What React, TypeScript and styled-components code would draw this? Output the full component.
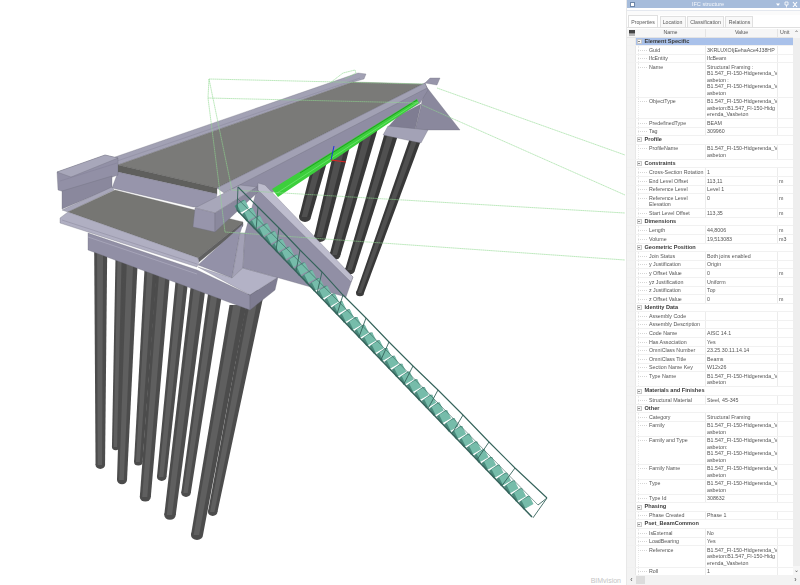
import React from 'react';
import styled, { createGlobalStyle } from 'styled-components';

type Prop = { name: string[]; value?: string[]; unit?: string };
type Section = { title: string; selected?: boolean; rows: Prop[] };

const LONG = 'B1.547_FI-150-Hidgerenda_V';

const sections: Section[] = [
  {
    title: 'Element Specific',
    selected: true,
    rows: [
      { name: ['Guid'], value: ['3KRLUXOIjEehaAce4J38HP'] },
      { name: ['IfcEntity'], value: ['IfcBeam'] },
      { name: ['Name'], value: ['Structural Framing :', LONG, 'asbeton :', LONG, 'asbeton'] },
      { name: ['ObjectType'], value: [LONG, 'asbeton:B1.547_FI-150-Hidg', 'erenda_Vasbeton'] },
      { name: ['PredefinedType'], value: ['BEAM'] },
      { name: ['Tag'], value: ['309960'] },
    ],
  },
  { title: 'Profile', rows: [{ name: ['ProfileName'], value: [LONG, 'asbeton'] }] },
  {
    title: 'Constraints',
    rows: [
      { name: ['Cross-Section Rotation'], value: ['1'] },
      { name: ['End Level Offset'], value: ['113,11'], unit: 'm' },
      { name: ['Reference Level'], value: ['Level 1'] },
      { name: ['Reference Level', 'Elevation'], value: ['0'], unit: 'm' },
      { name: ['Start Level Offset'], value: ['113,35'], unit: 'm' },
    ],
  },
  {
    title: 'Dimensions',
    rows: [
      { name: ['Length'], value: ['44,8006'], unit: 'm' },
      { name: ['Volume'], value: ['19,513083'], unit: 'm3' },
    ],
  },
  {
    title: 'Geometric Position',
    rows: [
      { name: ['Join Status'], value: ['Both joins enabled'] },
      { name: ['y Justification'], value: ['Origin'] },
      { name: ['y Offset Value'], value: ['0'], unit: 'm' },
      { name: ['yz Justification'], value: ['Uniform'] },
      { name: ['z Justification'], value: ['Top'] },
      { name: ['z Offset Value'], value: ['0'], unit: 'm' },
    ],
  },
  {
    title: 'Identity Data',
    rows: [
      { name: ['Assembly Code'] },
      { name: ['Assembly Description'] },
      { name: ['Code Name'], value: ['AISC 14.1'] },
      { name: ['Has Association'], value: ['Yes'] },
      { name: ['OmniClass Number'], value: ['23.25.30.11.14.14'] },
      { name: ['OmniClass Title'], value: ['Beams'] },
      { name: ['Section Name Key'], value: ['W12x26'] },
      { name: ['Type Name'], value: [LONG, 'asbeton'] },
    ],
  },
  { title: 'Materials and Finishes', rows: [{ name: ['Structural Material'], value: ['Steel, 45-345'] }] },
  {
    title: 'Other',
    rows: [
      { name: ['Category'], value: ['Structural Framing'] },
      { name: ['Family'], value: [LONG, 'asbeton'] },
      { name: ['Family and Type'], value: [LONG, 'asbeton:', LONG, 'asbeton'] },
      { name: ['Family Name'], value: [LONG, 'asbeton'] },
      { name: ['Type'], value: [LONG, 'asbeton'] },
      { name: ['Type Id'], value: ['308632'] },
    ],
  },
  { title: 'Phasing', rows: [{ name: ['Phase Created'], value: ['Phase 1'] }] },
  {
    title: 'Pset_BeamCommon',
    rows: [
      { name: ['IsExternal'], value: ['No'] },
      { name: ['LoadBearing'], value: ['Yes'] },
      { name: ['Reference'], value: [LONG, 'asbeton:B1.547_FI-150-Hidg', 'erenda_Vasbeton'] },
      { name: ['Roll'], value: ['1'] },
    ],
  },
];

const tabs = ['Properties', 'Location', 'Classification', 'Relations'];

// [top x, top y, bottom x, bottom y, top width, bottom width]
const frontPiles = [
  [120, 258, 115.7, 447, 9, 7.5],
  [100.7, 252, 100.3, 465, 13, 9.5],
  [150.7, 270, 138.3, 462, 12.5, 8.5],
  [130.7, 262, 122, 480, 14, 10],
  [181.7, 282, 161.7, 477, 12.5, 9.5],
  [163, 274, 145.3, 497, 14, 11],
  [215, 294, 186, 493, 14, 9.5],
  [198, 288, 170, 515, 15, 11.5],
  [256.7, 290, 212.7, 512, 16, 9.5],
  [238, 305, 197, 535, 17, 12],
];

const backPiles = [
  [320, 162, 305, 217, 14, 12],
  [342, 148, 320, 237, 15, 12],
  [370, 130, 335, 255, 15, 11],
  [392, 132, 350, 270, 14, 10],
  [417, 135, 360, 293, 12, 8],
];

const railPosts = [
  [238, 187], [258, 207], [279, 228], [300, 250], [322, 272], [343, 295], [366, 318],
  [389, 342], [413, 366], [438, 390], [463, 415], [489, 442], [515, 468], [547, 498],
];

const wires = [
  '209,79 423,84',
  '208,98 420,103',
  '209,79 208,98 225,232',
  '209,79 232,190',
  '232,190 625,213',
  '225,232 625,260',
  '437,88 625,155',
  '422,105 625,195',
  '330,83 343,73 355,70 356,73 345,79',
];

function Pile({ p, dark }: { p: number[]; dark?: boolean }) {
  const [x1, y1, x2, y2, w1, w2] = p;
  const shape = `${x1 - w1 / 2},${y1} ${x1 + w1 / 2},${y1} ${x2 + w2 / 2},${y2} ${x2 - w2 / 2},${y2}`;
  // lit stripe left of centre
  const lit = `${x1 - w1 * 0.28},${y1} ${x1 + w1 * 0.18},${y1} ${x2 + w2 * 0.18},${y2} ${x2 - w2 * 0.28},${y2}`;
  return (
    <g>
      <ellipse cx={x2} cy={y2} rx={w2 / 2} ry={w2 / 2.4} fill={dark ? '#3c3c3c' : '#4c4c4c'} />
      <polygon points={shape} fill={dark ? '#383838' : '#4c4c4c'} />
      <polygon points={lit} fill={dark ? '#505050' : '#5f5f5f'} />
    </g>
  );
}

function Face({ d, c, edge }: { d: string; c: string; edge?: string }) {
  return <polygon points={d} fill={c} stroke={edge || '#6a6878'} strokeWidth={0.3} strokeLinejoin="round" />;
}

const stringerY = (x: number) => 210 + (x - 237) * 1.04;

function Stair() {
  const count = 39;
  const treads = new Array(count).fill(0).map((_, i) => {
    const x = 240 + (i / count) * 292;
    const y = stringerY(x);
    const px = x - 4;
    const py = y - 8;
    return (
      <g key={i}>
        <polygon
          points={`${px - 1.5},${py + 1} ${px + 7},${py - 5} ${px + 9},${py - 5} ${px + 11},${py + 3} ${px + 3},${py + 8.5}`}
          fill="#4a8a7c"
        />
        <polygon
          points={`${px + 1},${py - 0.5} ${px + 9},${py - 5} ${px + 13},${py + 3} ${px + 5},${py + 7.5}`}
          fill="#76bcaa"
        />
      </g>
    );
  });
  return (
    <g>
      {treads}
      <g stroke="#35635b" fill="none">
        <polyline points={railPosts.map((p) => p.join(',')).join(' ')} strokeWidth={1.1} />
        <line x1={237} y1={198} x2={538} y2={505} strokeWidth={0.6} />
        <line x1={237} y1={210} x2={532} y2={517} strokeWidth={1.5} />
        {railPosts.map(([x, y], i) => {
          const bx = x - 1 - (i / 13) * 13;
          return <line key={i} x1={x} y1={y} x2={bx} y2={stringerY(bx)} strokeWidth={0.9} />;
        })}
        <line x1={547} y1={498} x2={538} y2={505} strokeWidth={0.9} />
      </g>
    </g>
  );
}

function BridgeModel() {
  return (
    <Model viewBox="0 0 626 585">
      {backPiles.map((p, i) => (
        <Pile key={i} p={p} dark />
      ))}

      {/* far abutment */}
      <Face d="425,85 460,130 415,130 421,106" c="#8a889d" />
      <Face d="421,104 415,130 388,127 398,116" c="#7f7d92" />
      <Face d="388,126 428,130 421,143 383,135" c="#a3a2b6" />
      <Face d="425,83 430,78 440,78 437,85" c="#9795aa" />

      {/* back kerb and deck */}
      <Face d="115,157 358,73 366,74 364,79 353,82 118,165" c="#a2a1b4" />
      <polyline points="117,161 360,78" stroke="#8b899c" strokeWidth={0.5} fill="none" />
      <Face d="118,165 353,82 423,84 217,188" c="#7a7a78" edge="#6a6a68" />
      <Face d="118,165 217,188 217,194 118,172" c="#5f5f5d" edge="#595959" />
      <Face d="118,172 217,194 215,208 193,207 112,188" c="#9795ab" />

      {/* side beam */}
      <Face d="217,188 425,83 428,90 420,103 273,192 258,190" c="#8f8da3" />
      <Face d="217,188 425,83 427,88 224,193" c="#a2a1b4" />

      {/* green element */}
      <polygon points="272,189 417,99 419,103 278,197" fill="#3ccf3c" />
      <polyline points="300,173 417,100" stroke="#128a12" strokeWidth={0.7} fill="none" />
      <polyline points="277,193 418,102" stroke="#8af58a" strokeWidth={0.5} fill="none" />

      {/* near end block and wall */}
      <Face d="57,172 105,155 118,158 118,175 68,193 58,190" c="#9290a6" />
      <Face d="57,172 105,155 118,158 71,177" c="#a8a7ba" />
      <polyline points="60,181 117,163" stroke="#77758a" strokeWidth={0.3} fill="none" />
      <Face d="62,191 112,176 112,188 62,209" c="#8a889d" />

      {frontPiles.map((p, i) => (
        <Pile key={i} p={p} />
      ))}

      {/* pile cap */}
      <Face d="88,233 197,270 250,295 250,310 88,250" c="#918fa5" />
      <polyline points="88,237 197,274" stroke="#b3b2c5" strokeWidth={0.6} fill="none" />
      <Face d="250,295 278,277 275,290 250,310" c="#7f7d92" />

      {/* lower deck */}
      <Face d="62,210 112,187 114,190 68,212" c="#a8a7ba" />
      <Face d="68,212 115,190 243,222 198,258" c="#767673" edge="#6a6a68" />
      <Face d="198,258 243,222 243,226 199,262" c="#606060" edge="#595959" />
      <Face d="60,218 68,212 198,258 199,262 197,267 60,223" c="#b0afc2" />
      <polyline points="62,220 197,264" stroke="#8b899c" strokeWidth={0.5} fill="none" />

      {/* abutment walls */}
      <Face d="198,265 243,224 240,233 232,278" c="#9391a8" />
      <Face d="232,278 240,233 245,233 243,268" c="#a3a1b6" />
      <Face d="198,267 232,278 243,268 272,276 278,277 250,295" c="#b3b2c6" />
      <Face d="258,185 353,277 346,297 272,276 243,268 245,233" c="#918fa5" />
      <Face d="258,183 265,185 353,277 351,282 258,190" c="#bdbccd" />

      {/* near block */}
      <Face d="195,208 240,185 257,187 215,213" c="#a8a7ba" />
      <Face d="195,208 215,213 215,232 193,227" c="#9795ab" />
      <Face d="215,213 257,187 258,192 215,232" c="#8a889d" />

      <g stroke="#8ed88e" strokeWidth={0.6} fill="none" strokeDasharray="1.6 0.3">
        {wires.map((d) => (
          <polyline key={d} points={d} />
        ))}
      </g>

      <line x1={331} y1={160} x2={334} y2={146} stroke="#2030e0" strokeWidth={1} />
      <line x1={331} y1={160} x2={346} y2={162} stroke="#e02020" strokeWidth={1} />

      <Stair />
    </Model>
  );
}

function PropRow({ row }: { row: Prop }) {
  return (
    <Row>
      <Gutter />
      <Tree />
      <NameCell>
        {row.name.map((l) => (
          <Line key={l}>{l}</Line>
        ))}
      </NameCell>
      <ValueCell>
        {row.value?.map((l, i) => (
          <Line key={i}>{l}</Line>
        ))}
      </ValueCell>
      <UnitCell>{row.unit}</UnitCell>
    </Row>
  );
}

export default function App() {
  return (
    <Page>
      <GlobalStyle />
      <Viewport>
        <BridgeModel />
        <Watermark>BIMvision</Watermark>
      </Viewport>
      <Panel>
        <TitleBar>
          <TitleIcon />
          <Title>IFC structure</Title>
          <svg width="22" height="7" viewBox="0 0 22 7">
            <path d="M0 2.5h4L2 5z" fill="#fff" />
            <path d="M9 1h3v3h-3zM10.5 4v2.5" stroke="#fff" strokeWidth={0.8} fill="none" />
            <path d="M17 1l4 5M21 1l-4 5" stroke="#fff" strokeWidth={1.1} />
          </svg>
        </TitleBar>
        <Toolbar />
        <TabStrip>
          {tabs.map((t, i) => (
            <Tab key={t} active={i === 0}>
              {t}
            </Tab>
          ))}
        </TabStrip>
        <TableArea>
          <Table>
            <HeadRow>
              <HeadIcon>
                <svg width="6" height="6" viewBox="0 0 6 6">
                  <path d="M0 0h6v3H0zM1 3v3M3 3v3M5 3v3" fill="#444" stroke="#444" strokeWidth={0.7} />
                </svg>
              </HeadIcon>
              <HeadCell>Name</HeadCell>
              <HeadCell>Value</HeadCell>
              <UnitHead>Unit</UnitHead>
            </HeadRow>
            {sections.map((s) => (
              <React.Fragment key={s.title}>
                <GroupRow selected={s.selected}>
                  <Gutter />
                  <FoldBox />
                  <GroupTitle>{s.title}</GroupTitle>
                </GroupRow>
                {s.rows.map((r) => (
                  <PropRow key={r.name[0]} row={r} />
                ))}
              </React.Fragment>
            ))}
          </Table>
          <VScroll>
            <Arrow>⌃</Arrow>
            <Track />
            <Arrow>⌄</Arrow>
          </VScroll>
        </TableArea>
        <HScroll>
          <ScrollEnd>‹</ScrollEnd>
          <Thumb />
          <HTrack />
          <ScrollEnd>›</ScrollEnd>
        </HScroll>
      </Panel>
    </Page>
  );
}

const GlobalStyle = createGlobalStyle`
  html, body {
    margin: 0;
    padding: 0;
    background: #fff;
    overflow: hidden;
  }
`;

const Page = styled.div`
  width: 800px;
  height: 585px;
  display: flex;
  overflow: hidden;
  font-family: "Liberation Sans", Arial, sans-serif;
`;

const Viewport = styled.div`
  position: relative;
  flex: 0 0 626px;
  height: 585px;
  background: #fff;
`;

const Model = styled.svg`
  display: block;
  width: 626px;
  height: 585px;
  filter: blur(0.3px);
`;

const Watermark = styled.span`
  position: absolute;
  right: 5px;
  bottom: 1px;
  font-size: 7px;
  color: #c4c4c4;
`;

const Panel = styled.div`
  flex: 0 0 174px;
  height: 585px;
  display: flex;
  flex-direction: column;
  background: #fff;
  border-left: 1px solid #e8e8e8;
  box-sizing: border-box;
  filter: blur(0.3px);
`;

const TitleBar = styled.div`
  flex: 0 0 8px;
  display: flex;
  align-items: center;
  padding: 0 2px 0 3px;
  background: #a6bcdb;
`;

const TitleIcon = styled.span`
  width: 5px;
  height: 5px;
  background: #fff;
  border: 1px solid #6d86a8;
  box-sizing: border-box;
`;

const Title = styled.span`
  flex: 1;
  text-align: center;
  font-size: 5.6px;
  color: #f4f7fb;
  padding-left: 5px;
`;

const Toolbar = styled.div`
  flex: 0 0 4px;
  margin-top: 2px;
  border-top: 1px solid #e4e8ef;
  background: #fbfbfb;
`;

const TabStrip = styled.div`
  flex: 0 0 13px;
  display: flex;
  gap: 1.5px;
  align-items: flex-end;
  padding-left: 1px;
  border-bottom: 1px solid #e0e0e0;
  box-sizing: border-box;
`;

const Tab = styled.div<{ active?: boolean }>`
  height: ${(p) => (p.active ? 12 : 11)}px;
  display: flex;
  align-items: center;
  padding: 0 2.2px;
  font-size: 5.2px;
  color: #5a5a5a;
  background: ${(p) => (p.active ? '#fff' : '#f9f9f9')};
  border: 1px solid #e0e0e0;
  border-bottom: none;
  box-sizing: border-box;
`;

const TableArea = styled.div`
  flex: 1;
  min-height: 0;
  display: flex;
  overflow: hidden;
  margin-top: 1px;
`;

const Table = styled.div`
  flex: 1;
  min-width: 0;
  overflow: hidden;
  font-size: 5.3px;
  color: #555;
`;

const HeadRow = styled.div`
  height: 8.6px;
  display: grid;
  grid-template-columns: 9px 70px 72px 15px;
  background: #f6f6f6;
  border-bottom: 1px solid #e4e4e4;
  box-sizing: border-box;
  line-height: 7.6px;
`;

const HeadIcon = styled.div`
  display: flex;
  align-items: center;
  justify-content: center;
`;

const HeadCell = styled.div`
  text-align: center;
  border-right: 1px solid #e4e4e4;
`;

const UnitHead = styled.div`
  padding-left: 2px;
`;

const Row = styled.div`
  display: grid;
  grid-template-columns: 9px 10px 60px 72px 15px;
  border-bottom: 1px solid #f1f1f1;
  line-height: 6.4px;
`;

const Gutter = styled.div`
  background: #f3f3f3;
  border-right: 1px solid #e8e8e8;
  box-sizing: border-box;
`;

const Tree = styled.div`
  position: relative;
  &::before {
    content: '';
    position: absolute;
    left: 2px;
    top: 0;
    bottom: 0;
    border-left: 1px dotted #ebebeb;
  }
  &::after {
    content: '';
    position: absolute;
    left: 2px;
    right: -1px;
    top: 3.6px;
    border-top: 1px dotted #d6d6d6;
  }
`;

const NameCell = styled.div`
  padding: 0.6px 0 0.6px 3px;
  border-right: 1px solid #ececec;
  white-space: nowrap;
  overflow: hidden;
`;

const ValueCell = styled.div`
  padding: 0.6px 0 0.6px 1px;
  border-right: 1px solid #ececec;
  white-space: nowrap;
  overflow: hidden;
  box-sizing: border-box;
`;

const UnitCell = styled.div`
  padding: 0.6px 0 0.6px 1px;
`;

const Line = styled.div``;

const GroupRow = styled.div<{ selected?: boolean }>`
  display: flex;
  height: 8.6px;
  align-items: stretch;
  box-sizing: border-box;
  background: ${(p) => (p.selected ? '#a9c1ea' : '#fff')};
  border-bottom: 1px solid #f1f1f1;
  & > div:first-child {
    flex: 0 0 9px;
  }
`;

const FoldBox = styled.span`
  position: relative;
  flex: 0 0 5px;
  height: 5px;
  margin: 1.3px 3px 0 0.5px;
  background: #f6f6f6;
  border: 1px solid #c8c8c8;
  box-sizing: border-box;
  &::after {
    content: '';
    position: absolute;
    left: 0.5px;
    right: 0.5px;
    top: 1px;
    height: 1px;
    background: #8a8a8a;
  }
`;

const GroupTitle = styled.span`
  font-size: 5.6px;
  font-weight: 700;
  color: #3a3a3a;
  line-height: 7.6px;
  white-space: nowrap;
`;

const VScroll = styled.div`
  flex: 0 0 7px;
  display: flex;
  flex-direction: column;
  background: #f6f6f6;
`;

const Arrow = styled.div`
  flex: 0 0 9px;
  font-size: 6px;
  line-height: 9px;
  text-align: center;
  color: #555;
`;

const Track = styled.div`
  flex: 1;
  background: #eeeeee;
`;

const HScroll = styled.div`
  flex: 0 0 10px;
  display: flex;
  align-items: center;
  background: #f3f3f3;
`;

const ScrollEnd = styled.span`
  flex: 0 0 9px;
  font-size: 7px;
  line-height: 10px;
  text-align: center;
  color: #444;
`;

const Thumb = styled.span`
  flex: 0 0 9px;
  height: 8px;
  background: #dcdcdc;
`;

const HTrack = styled.span`
  flex: 1;
`;
